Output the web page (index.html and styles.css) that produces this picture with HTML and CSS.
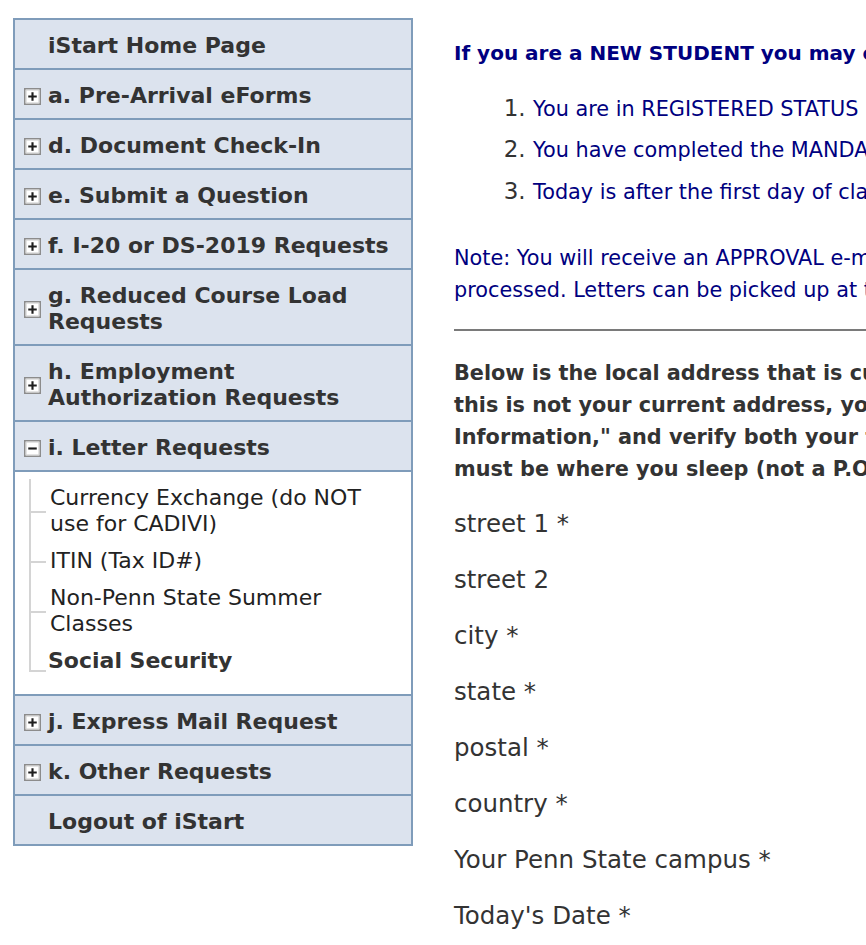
FILE: index.html
```html
<!DOCTYPE html>
<html>
<head>
<meta charset="utf-8">
<link rel="stylesheet" href="styles.css">
</head>
<body>
<div class="page">
  <nav class="sidebar">
    <div class="row"><span class="noicon"></span><span class="label">iStart Home Page</span></div>
    <div class="row"><svg class="icon" viewBox="0 0 16 16"><rect x="0.75" y="0.75" width="14.5" height="14.5" fill="#fff" stroke="#8c8c8c" stroke-width="1.5"/><rect x="2" y="2" width="12" height="12" fill="#fff" stroke="#d6d6d6" stroke-width="1"/><path d="M4 8h8M8 4v8" stroke="#1e1e1e" stroke-width="2"/></svg><span class="label">a. Pre-Arrival eForms</span></div>
    <div class="row"><svg class="icon" viewBox="0 0 16 16"><rect x="0.75" y="0.75" width="14.5" height="14.5" fill="#fff" stroke="#8c8c8c" stroke-width="1.5"/><rect x="2" y="2" width="12" height="12" fill="#fff" stroke="#d6d6d6" stroke-width="1"/><path d="M4 8h8M8 4v8" stroke="#1e1e1e" stroke-width="2"/></svg><span class="label">d. Document Check-In</span></div>
    <div class="row"><svg class="icon" viewBox="0 0 16 16"><rect x="0.75" y="0.75" width="14.5" height="14.5" fill="#fff" stroke="#8c8c8c" stroke-width="1.5"/><rect x="2" y="2" width="12" height="12" fill="#fff" stroke="#d6d6d6" stroke-width="1"/><path d="M4 8h8M8 4v8" stroke="#1e1e1e" stroke-width="2"/></svg><span class="label">e. Submit a Question</span></div>
    <div class="row"><svg class="icon" viewBox="0 0 16 16"><rect x="0.75" y="0.75" width="14.5" height="14.5" fill="#fff" stroke="#8c8c8c" stroke-width="1.5"/><rect x="2" y="2" width="12" height="12" fill="#fff" stroke="#d6d6d6" stroke-width="1"/><path d="M4 8h8M8 4v8" stroke="#1e1e1e" stroke-width="2"/></svg><span class="label">f. I-20 or DS-2019 Requests</span></div>
    <div class="row"><svg class="icon" viewBox="0 0 16 16"><rect x="0.75" y="0.75" width="14.5" height="14.5" fill="#fff" stroke="#8c8c8c" stroke-width="1.5"/><rect x="2" y="2" width="12" height="12" fill="#fff" stroke="#d6d6d6" stroke-width="1"/><path d="M4 8h8M8 4v8" stroke="#1e1e1e" stroke-width="2"/></svg><span class="label">g. Reduced Course Load<br>Requests</span></div>
    <div class="row"><svg class="icon" viewBox="0 0 16 16"><rect x="0.75" y="0.75" width="14.5" height="14.5" fill="#fff" stroke="#8c8c8c" stroke-width="1.5"/><rect x="2" y="2" width="12" height="12" fill="#fff" stroke="#d6d6d6" stroke-width="1"/><path d="M4 8h8M8 4v8" stroke="#1e1e1e" stroke-width="2"/></svg><span class="label">h. Employment<br>Authorization Requests</span></div>
    <div class="row"><svg class="icon" viewBox="0 0 16 16"><rect x="0.75" y="0.75" width="14.5" height="14.5" fill="#fff" stroke="#8c8c8c" stroke-width="1.5"/><rect x="2" y="2" width="12" height="12" fill="#fff" stroke="#d6d6d6" stroke-width="1"/><path d="M4 8h8" stroke="#1e1e1e" stroke-width="2"/></svg><span class="label">i. Letter Requests</span></div>
    <ul class="submenu">
      <li>Currency Exchange (do NOT<br>use for CADIVI)</li>
      <li>ITIN (Tax ID#)</li>
      <li>Non-Penn State Summer<br>Classes</li>
      <li class="current">Social Security</li>
    </ul>
    <div class="row"><svg class="icon" viewBox="0 0 16 16"><rect x="0.75" y="0.75" width="14.5" height="14.5" fill="#fff" stroke="#8c8c8c" stroke-width="1.5"/><rect x="2" y="2" width="12" height="12" fill="#fff" stroke="#d6d6d6" stroke-width="1"/><path d="M4 8h8M8 4v8" stroke="#1e1e1e" stroke-width="2"/></svg><span class="label">j. Express Mail Request</span></div>
    <div class="row"><svg class="icon" viewBox="0 0 16 16"><rect x="0.75" y="0.75" width="14.5" height="14.5" fill="#fff" stroke="#8c8c8c" stroke-width="1.5"/><rect x="2" y="2" width="12" height="12" fill="#fff" stroke="#d6d6d6" stroke-width="1"/><path d="M4 8h8M8 4v8" stroke="#1e1e1e" stroke-width="2"/></svg><span class="label">k. Other Requests</span></div>
    <div class="row last"><span class="noicon"></span><span class="label">Logout of iStart</span></div>
  </nav>
  <main class="content">
    <p class="intro">If you are a NEW STUDENT you may only submit this request if:</p>
    <ol class="conditions">
      <li><span>You are in REGISTERED STATUS in iStart</span></li>
      <li><span>You have completed the MANDATORY check-in</span></li>
      <li><span>Today is after the first day of classes</span></li>
    </ol>
    <p class="note">Note: You will receive an APPROVAL e-mail when your letter has been<br>processed. Letters can be picked up at the front desk of the office.</p>
    <hr class="divider">
    <p class="address-note">Below is the local address that is currently on file for you. If<br>this is not your current address, you must go to "Update Personal<br>Information," and verify both your foreign and local addresses. This<br>must be where you sleep (not a P.O. Box or department address).</p>
    <div class="fields">
      <div class="field">street 1 *</div>
      <div class="field">street 2</div>
      <div class="field">city *</div>
      <div class="field">state *</div>
      <div class="field">postal *</div>
      <div class="field">country *</div>
      <div class="field">Your Penn State campus *</div>
      <div class="field">Today's Date *</div>
    </div>
  </main>
</div>
</body>
</html>
```
FILE: styles.css
```css
html, body {
  margin: 0;
  padding: 0;
  overflow: hidden;
  background: #fff;
}
body {
  font-family: "DejaVu Sans", Verdana, sans-serif;
  color: #333;
}
.page {
  display: flex;
  align-items: flex-start;
  padding: 18px 0 0 13px;
  gap: 41px;
  width: 1400px;
}
.sidebar {
  width: 396px;
  flex: none;
  border: 2px solid #7f9cba;
  background: #dce3ee;
}
.row {
  display: flex;
  align-items: center;
  border-bottom: 2px solid #7f9cba;
  padding: 13px 0 9px 9px;
  min-height: 26px;
}
.row.last { border-bottom: none; }
.icon {
  width: 17px;
  height: 17px;
  flex: none;
  margin-right: 7px;
  align-self: center;
}
.noicon {
  width: 24px;
  flex: none;
}
.label {
  font-weight: bold;
  font-size: 22px;
  line-height: 26px;
  color: #333;
}
.submenu {
  list-style: none;
  margin: 0;
  padding: 7px 0 15px 0;
  background: #fff;
  border-bottom: 2px solid #7f9cba;
}
.submenu li {
  position: relative;
  padding: 6px 0 5px 35px;
  font-size: 22px;
  line-height: 26px;
  color: #222;
}
.submenu li::before {
  content: "";
  position: absolute;
  left: 14px;
  top: 0;
  bottom: 0;
  border-left: 2px solid #d4d4d4;
}
.submenu li::after {
  content: "";
  position: absolute;
  left: 14px;
  width: 17px;
  top: 50%;
  border-top: 2px solid #d4d4d4;
}
.submenu li.current {
  font-weight: bold;
  padding-left: 33px;
  color: #333;
}
.submenu li.current::before { bottom: auto; height: 30px; }
.submenu li.current::after { top: 28px; }
.content {
  flex: none;
  width: 900px;
  white-space: nowrap;
}
.intro {
  margin: 22px 0 0 0;
  font-weight: bold;
  font-size: 20px;
  line-height: 26px;
  color: #000080;
}
.conditions {
  margin: 29px 0 0 0;
  padding: 0 0 0 79px;
  color: #333;
}
.conditions li {
  line-height: 26px;
  font-size: 23px;
}
.conditions li:nth-child(1) { margin-bottom: 14px; }
.conditions li:nth-child(2) { margin-bottom: 15px; }
.conditions li span {
  font-size: 20.8px;
  color: #000080;
}
.note {
  margin: 37px 0 0 0;
  font-size: 20.8px;
  line-height: 32px;
  color: #000080;
}
.divider {
  margin: 23px 0 0 0;
  border: none;
  border-top: 2px solid #7a7a7a;
  width: 900px;
}
.address-note {
  margin: 26px 0 0 0;
  font-weight: bold;
  font-size: 20.8px;
  line-height: 32px;
  color: #333;
}
.fields {
  margin-top: 25px;
  display: flex;
  flex-direction: column;
  gap: 28px;
}
.field {
  font-size: 24.5px;
  line-height: 28px;
  color: #333;
}
```
